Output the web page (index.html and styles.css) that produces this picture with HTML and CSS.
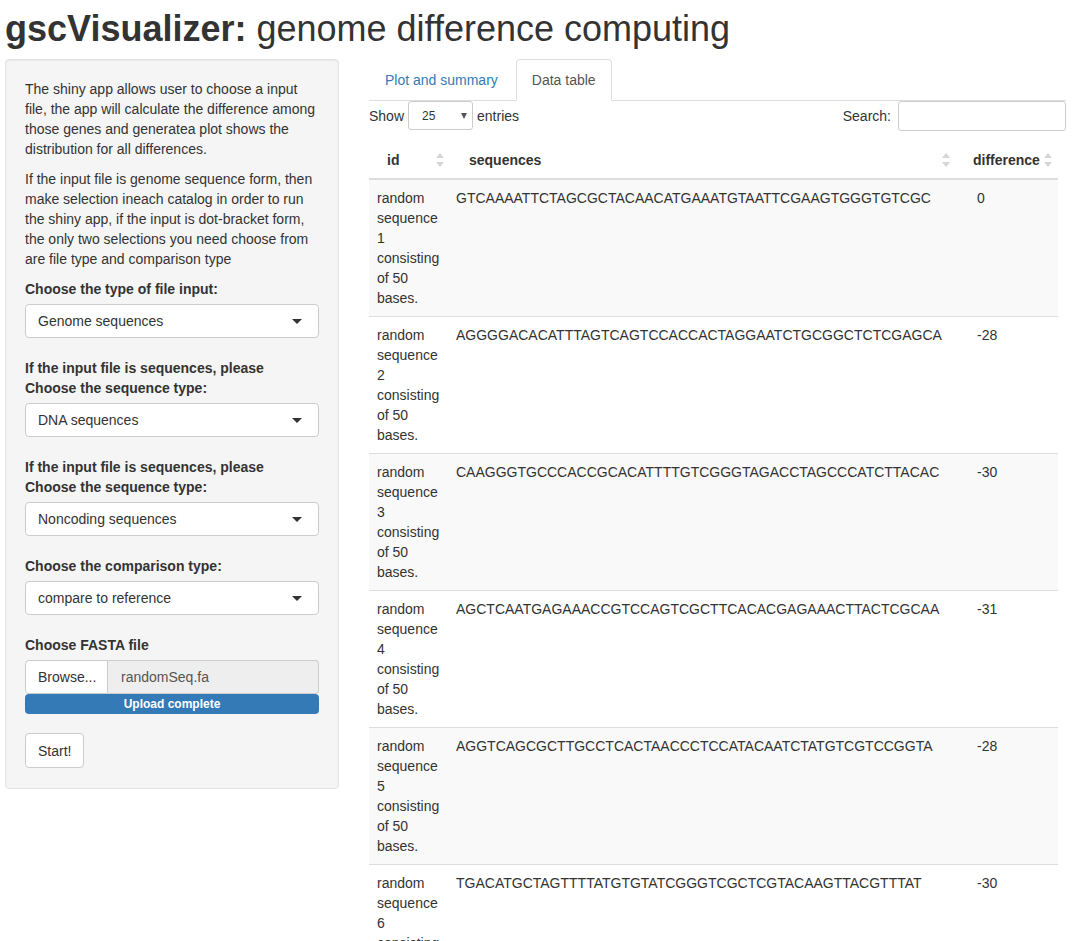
FILE: index.html
```html
<!DOCTYPE html>
<html>
<head>
<meta charset="utf-8">
<title>gscVisualizer</title>
<link rel="stylesheet" href="styles.css">
</head>
<body>
<div class="page">
  <h1 class="title"><b>gscVisualizer:</b> genome difference computing</h1>
  <div class="layout">
    <aside class="well">
      <p>The shiny app allows user to choose a input file, the app will calculate the difference among those genes and generatea plot shows the distribution for all differences.</p>
      <p>If the input file is genome sequence form, then make selection ineach catalog in order to run the shiny app, if the input is dot-bracket form, the only two selections you need choose from are file type and comparison type</p>
      <div class="form-group">
        <label>Choose the type of file input:</label>
        <div class="select"><span>Genome sequences</span><i class="caret"></i></div>
      </div>
      <div class="form-group">
        <label>If the input file is sequences, please Choose the sequence type:</label>
        <div class="select"><span>DNA sequences</span><i class="caret"></i></div>
      </div>
      <div class="form-group">
        <label>If the input file is sequences, please Choose the sequence type:</label>
        <div class="select"><span>Noncoding sequences</span><i class="caret"></i></div>
      </div>
      <div class="form-group">
        <label>Choose the comparison type:</label>
        <div class="select"><span>compare to reference</span><i class="caret"></i></div>
      </div>
      <div class="form-group file-group">
        <label>Choose FASTA file</label>
        <div class="input-group">
          <span class="btn-browse">Browse...</span>
          <span class="file-name">randomSeq.fa</span>
        </div>
        <div class="progress">Upload complete</div>
      </div>
      <button class="btn">Start!</button>
    </aside>
    <main class="main">
      <ul class="tabs">
        <li><a>Plot and summary</a></li>
        <li class="active"><a>Data table</a></li>
      </ul>
      <div class="dt-controls">
        <div class="dt-length">Show <span class="dt-select">25<i class="mini-caret"></i></span> entries</div>
        <div class="dt-search">Search: <span class="dt-input"></span></div>
      </div>
      <table class="dt-head">
        <tr>
          <th class="h-id"><div class="th-in"><span>id</span><svg class="sort" width="8" height="14" viewBox="0 0 8 14"><polygon points="4,0 8,5 0,5"/><polygon points="0,9 8,9 4,14"/></svg></div></th>
          <th class="h-seq"><div class="th-in"><span>sequences</span><svg class="sort" width="8" height="14" viewBox="0 0 8 14"><polygon points="4,0 8,5 0,5"/><polygon points="0,9 8,9 4,14"/></svg></div></th>
          <th class="h-diff"><div class="th-in"><span>difference</span><svg class="sort" width="8" height="14" viewBox="0 0 8 14"><polygon points="4,0 8,5 0,5"/><polygon points="0,9 8,9 4,14"/></svg></div></th>
        </tr>
      </table>
      <table class="dt-body">
        <tr><td class="c-id">random sequence 1 consisting of 50 bases.</td><td class="c-seq">GTCAAAATTCTAGCGCTACAACATGAAATGTAATTCGAAGTGGGTGTCGC</td><td class="c-diff">0</td></tr>
        <tr><td class="c-id">random sequence 2 consisting of 50 bases.</td><td class="c-seq">AGGGGACACATTTAGTCAGTCCACCACTAGGAATCTGCGGCTCTCGAGCA</td><td class="c-diff">-28</td></tr>
        <tr><td class="c-id">random sequence 3 consisting of 50 bases.</td><td class="c-seq">CAAGGGTGCCCACCGCACATTTTGTCGGGTAGACCTAGCCCATCTTACAC</td><td class="c-diff">-30</td></tr>
        <tr><td class="c-id">random sequence 4 consisting of 50 bases.</td><td class="c-seq">AGCTCAATGAGAAACCGTCCAGTCGCTTCACACGAGAAACTTACTCGCAA</td><td class="c-diff">-31</td></tr>
        <tr><td class="c-id">random sequence 5 consisting of 50 bases.</td><td class="c-seq">AGGTCAGCGCTTGCCTCACTAACCCTCCATACAATCTATGTCGTCCGGTA</td><td class="c-diff">-28</td></tr>
        <tr><td class="c-id">random sequence 6 consisting of 50 bases.</td><td class="c-seq">TGACATGCTAGTTTTATGTGTATCGGGTCGCTCGTACAAGTTACGTTTAT</td><td class="c-diff">-30</td></tr>
      </table>
    </main>
  </div>
</div>
</body>
</html>
```
FILE: styles.css
```css
* { box-sizing: border-box; }
html, body { margin: 0; padding: 0; background: #fff; }
body {
  font-family: "Liberation Sans", Arial, Helvetica, sans-serif;
  font-size: 14px;
  line-height: 20px;
  color: #333;
}
.page { padding: 0 10px 0 5px; }
.title {
  margin: 9px 0 10px 0;
  font-size: 36px;
  line-height: 40px;
  font-weight: 400;
  color: #333;
}
.title b { font-weight: 700; }
.layout { display: flex; align-items: flex-start; gap: 30px; }

.well {
  width: 334px;
  flex: none;
  background: #f5f5f5;
  border: 1px solid #e3e3e3;
  border-radius: 4px;
  box-shadow: inset 0 1px 1px rgba(0,0,0,.05);
  padding: 19px 19px 20px;
}
.well p { margin: 0 0 10px 0; }
.form-group { margin-bottom: 20px; }
.form-group label { display: block; font-weight: 700; margin-bottom: 5px; }
.select {
  height: 34px;
  background: #fff;
  border: 1px solid #ccc;
  border-radius: 4px;
  padding: 6px 12px;
  display: flex;
  justify-content: space-between;
  align-items: center;
  color: #333;
}
.caret {
  width: 0; height: 0;
  border-left: 5px solid transparent;
  border-right: 5px solid transparent;
  border-top: 5px solid #333;
  margin-right: 4px;
}
.file-group { margin-bottom: 19px; }
.input-group { display: flex; height: 34px; }
.btn-browse {
  width: 83px;
  flex: none;
  background: #fff;
  border: 1px solid #ccc;
  border-radius: 4px 0 0 4px;
  padding: 6px 12px;
  color: #333;
}
.file-name {
  flex: 1;
  background: #eee;
  border: 1px solid #ccc;
  border-left: none;
  border-radius: 0 4px 4px 0;
  padding: 6px 13px;
  color: #555;
}
.progress {
  height: 20px;
  background: #337ab7;
  border-radius: 4px;
  color: #fff;
  font-size: 12px;
  font-weight: 700;
  line-height: 20px;
  text-align: center;
}
.btn {
  display: block;
  font-family: inherit;
  font-size: 14px;
  line-height: 20px;
  color: #333;
  background: #fff;
  border: 1px solid #ccc;
  border-radius: 4px;
  padding: 6px 12px;
  height: 35px;
}

.main { width: 697px; flex: none; }
.tabs {
  list-style: none;
  margin: 0;
  padding: 0;
  display: flex;
  border-bottom: 1px solid #ddd;
}
.tabs li { margin-bottom: -1px; margin-right: 2px; }
.tabs a {
  display: block;
  padding: 10px 15px;
  line-height: 20px;
  border: 1px solid transparent;
  border-radius: 4px 4px 0 0;
  color: #337ab7;
}
.tabs li.active a {
  color: #555;
  background: #fff;
  border-color: #ddd #ddd transparent;
}

.dt-controls {
  display: flex;
  justify-content: space-between;
  align-items: center;
  height: 29px;
  margin-bottom: 12px;
}
.dt-length { display: flex; align-items: center; }
.dt-select {
  display: inline-flex;
  align-items: center;
  justify-content: space-between;
  width: 65px;
  height: 29px;
  margin: 0 4px;
  padding: 0 5px 0 13px;
  font-size: 12px;
  border: 1px solid #ccc;
  border-radius: 3px;
  background: #fff;
}
.mini-caret {
  width: 0; height: 0;
  border-left: 3.5px solid transparent;
  border-right: 3.5px solid transparent;
  border-top: 6px solid #555;
}
.dt-search { display: flex; align-items: center; }
.dt-input {
  display: inline-block;
  width: 168px;
  height: 30px;
  margin-left: 7px;
  border: 1px solid #ccc;
  border-radius: 3px;
  background: #fff;
}

table { border-collapse: collapse; border-spacing: 0; }
.dt-head { width: 689px; table-layout: fixed; }
.dt-head th {
  font-weight: 700;
  text-align: left;
  padding: 8px 8px 8px 17px;
  border-bottom: 2px solid #ddd;
}
.th-in { display: flex; justify-content: space-between; align-items: center; }
.sort { fill: #d6d6d6; flex: none; }
.h-id { width: 83px; padding-left: 18px !important; }
.h-seq { width: 506px; }
.h-diff { width: 100px; padding-left: 15px !important; padding-right: 2px !important; }
.h-diff .th-in { justify-content: flex-start; gap: 4px; white-space: nowrap; }

.dt-body { width: 689px; table-layout: fixed; }
.dt-body td {
  padding: 8px;
  vertical-align: top;
  border-top: 1px solid #ddd;
}
.dt-body tr:first-child td { border-top: none; }
.dt-body tr:nth-child(odd) td { background: #f9f9f9; }
.c-id { width: 79px; }
.c-seq { width: 521px; }
.c-diff { width: 89px; }
```
